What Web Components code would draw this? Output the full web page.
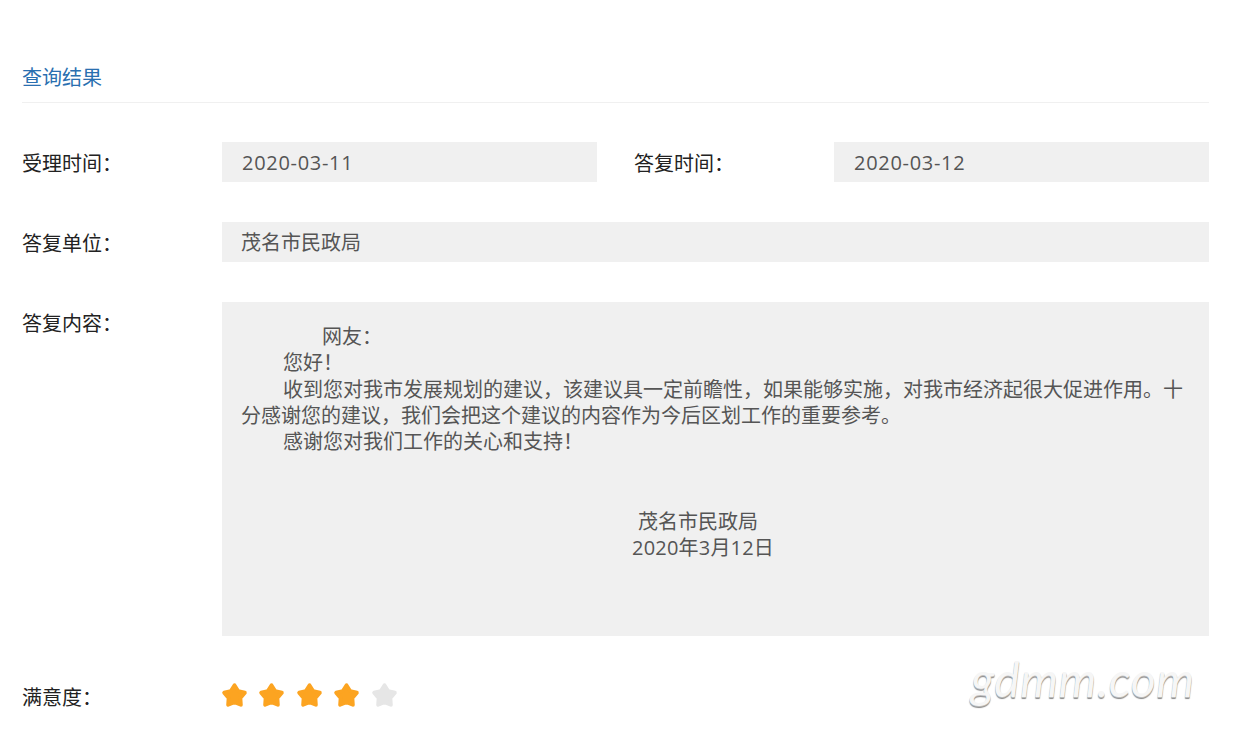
<!DOCTYPE html>
<html lang="zh-CN">
<head>
<meta charset="utf-8">
<style>
  html, body { margin: 0; background: #fff; }
  body { font-family: "Open Sans", "Noto Sans CJK SC", sans-serif; }
</style>
</head>
<body>
<query-result>
  <section-title>查询结果</section-title>
  <form-row label="受理时间：" style="margin-top:39px">
    <value-box class="date">2020-03-11</value-box>
    <form-row label="答复时间：" slot="second">
      <value-box class="date">2020-03-12</value-box>
    </form-row>
  </form-row>
  <form-row label="答复单位：">
    <value-box>茂名市民政局</value-box>
  </form-row>
  <form-row label="答复内容：">
    <reply-content>
      <p class="first">网友：</p>
      <p>您好！</p>
      <p style="margin-top:1px">收到您对我市发展规划的建议，该建议具一定前瞻性，如果能够实施，对我市经济起很大促进作用。十分感谢您的建议，我们会把这个建议的内容作为今后区划工作的重要参考。</p>
      <p>感谢您对我们工作的关心和支持！</p>
      <p class="sign" style="margin-top:54px;padding-left:397px;text-indent:0">茂名市民政局</p>
      <p class="sign" style="padding-left:391px;text-indent:0;letter-spacing:.2px">2020年3月12日</p>
    </reply-content>
  </form-row>
  <form-row label="满意度：" compact>
    <star-rate value="4"></star-rate>
  </form-row>
  <water-mark>gdmm.com</water-mark>
</query-result>

<script>
customElements.define(
  "query-result",
  class extends HTMLElement {
    constructor() {
      super();
      this.attachShadow({ mode: "open" }).innerHTML = `
        <style>
        :host {
          display: block;
          position: relative;
          height: 747px;
          box-sizing: border-box;
          padding: 63px 31px 0 22px;
          overflow: hidden;
        }
        </style>
        <slot></slot>
      `;
    }
  }
);

customElements.define(
  "section-title",
  class extends HTMLElement {
    constructor() {
      super();
      this.attachShadow({ mode: "open" }).innerHTML = `
        <style>
        :host {
          display: block;
          height: 40px;
          box-sizing: border-box;
          border-bottom: 1px solid #f0f0f0;
          color: #2a6fb0;
          font-size: 20px;
          line-height: 30px;
        }
        </style>
        <slot></slot>
      `;
    }
  }
);

customElements.define(
  "form-row",
  class extends HTMLElement {
    constructor() {
      super();
      this.attachShadow({ mode: "open" }).innerHTML = `
        <style>
        :host {
          display: flex;
          flex: 1 1 0;
          min-width: 0;
          margin-bottom: 40px;
          color: #222;
          font-size: 20px;
        }
        :host([slot="second"]) {
          margin: 0 0 0 37px;
        }
        :host([compact]) {
          margin-bottom: 0;
        }
        .label {
          flex: none;
          width: 200px;
          height: 40px;
          line-height: 44px;
        }
        .body {
          flex: 1 1 0;
          min-width: 0;
        }
        .second {
          display: flex;
          flex: 1 1 0;
          min-width: 0;
        }
        .second[hidden] {
          display: none;
        }
        </style>
        <div class="label"></div>
        <div class="body"><slot></slot></div>
        <div class="second" hidden><slot name="second"></slot></div>
      `;
    }

    connectedCallback() {
      this.shadowRoot.querySelector(".label").textContent =
        this.getAttribute("label");
      if (this.querySelector(":scope > [slot=second]")) {
        this.shadowRoot.querySelector(".second").hidden = false;
        // the second pair sits beside the first at half the row
        this.shadowRoot.querySelector(".body").style.flex = "none";
        this.shadowRoot.querySelector(".body").style.width = "375px";
      }
    }
  }
);

customElements.define(
  "value-box",
  class extends HTMLElement {
    constructor() {
      super();
      this.attachShadow({ mode: "open" }).innerHTML = `
        <style>
        :host {
          display: block;
          height: 40px;
          padding: 0 20px 0 19px;
          background: #f0f0f0;
          color: #555;
          font-size: 20px;
          line-height: 41px;
        }
        :host(.date) {
          padding-left: 20px;
          letter-spacing: .7px;
        }
        </style>
        <slot></slot>
      `;
    }
  }
);

customElements.define(
  "reply-content",
  class extends HTMLElement {
    constructor() {
      super();
      this.attachShadow({ mode: "open" }).innerHTML = `
        <style>
        :host {
          display: block;
          height: 334px;
          box-sizing: border-box;
          padding: 22px 20px 0 19px;
          background: #f0f0f0;
          color: #555;
          font-size: 20px;
          line-height: 26px;
        }
        ::slotted(p) {
          margin: 0;
          text-indent: 42px;
        }
        ::slotted(p.first) {
          text-indent: 81px;
        }
        </style>
        <slot></slot>
      `;
    }
  }
);

customElements.define(
  "star-rate",
  class extends HTMLElement {
    constructor() {
      super();
      this.attachShadow({ mode: "open" });
    }

    connectedCallback() {
      const value = Number(this.getAttribute("value")) || 0;
      const stars = [0, 1, 2, 3, 4]
        .map(
          (index) => `
          <svg viewBox="0 0 26 25" width="27" height="26" fill="${
            index < value ? "#fca421" : "#e6e6e6"
          }" stroke="${index < value ? "#fca421" : "#e6e6e6"}">
            <path stroke-width="3.6" stroke-linejoin="round" d="M13 3L16.53 8.65 23 10.26 18.71 15.35 19.17 22 13 19.5 6.83 22 7.29 15.35 3 10.26 9.47 8.65z"/>
          </svg>
        `
        )
        .join("");
      this.shadowRoot.innerHTML = `
        <style>
        :host {
          display: flex;
          gap: 10.5px;
          height: 38px;
          align-items: center;
          margin-left: -1.3px;
        }
        svg {
          display: block;
          flex: none;
        }
        </style>
        ${stars}
      `;
    }
  }
);

customElements.define(
  "water-mark",
  class extends HTMLElement {
    constructor() {
      super();
      this.attachShadow({ mode: "open" }).innerHTML = `
        <style>
        :host {
          position: absolute;
          left: 971px;
          top: 647px;
          color: #f6f6f6;
          font-family: Lato, sans-serif;
          font-style: italic;
          font-weight: 400;
          font-size: 48px;
          line-height: 64px;
          letter-spacing: .6px;
          white-space: nowrap;
          text-shadow: 0 1px 0 #bbb, 0 2px 1px #888;
        }
        </style>
        <slot></slot>
      `;
    }
  }
);
</script>
</body>
</html>
